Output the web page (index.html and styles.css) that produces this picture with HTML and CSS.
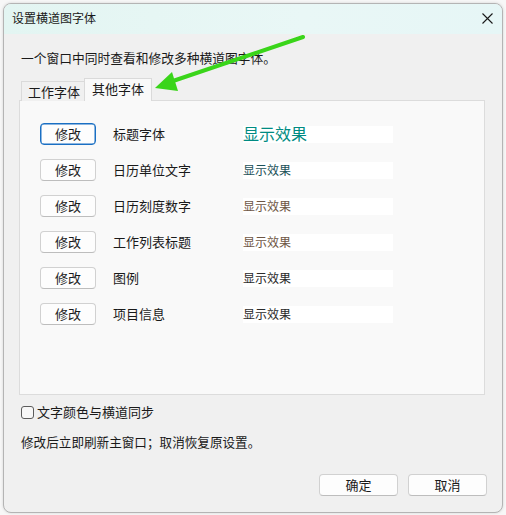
FILE: index.html
```html
<!DOCTYPE html>
<html lang="zh-CN">
<head>
<meta charset="utf-8">
<title>设置横道图字体</title>
<link rel="stylesheet" href="styles.css">
</head>
<body>
<div class="dialog">
  <div class="titlebar">
    <span class="title">设置横道图字体</span>
    <svg class="close" width="11" height="11" viewBox="0 0 11 11"><path d="M0.5 0.5 L10.5 10.5 M10.5 0.5 L0.5 10.5" stroke="#1a1a1a" stroke-width="1.1" fill="none"/></svg>
  </div>
  <div class="body">
    <p class="desc">一个窗口中同时查看和修改多种横道图字体。</p>
    <div class="tabs">
      <div class="tab">工作字体</div>
      <div class="tab active">其他字体</div>
    </div>
    <div class="panel">
      <div class="row"><button class="btn focus">修改</button><span class="label">标题字体</span><span class="preview big c-teal">显示效果</span></div>
      <div class="row"><button class="btn">修改</button><span class="label">日历单位文字</span><span class="preview c-dteal">显示效果</span></div>
      <div class="row"><button class="btn">修改</button><span class="label">日历刻度数字</span><span class="preview c-brown">显示效果</span></div>
      <div class="row"><button class="btn">修改</button><span class="label">工作列表标题</span><span class="preview c-brown">显示效果</span></div>
      <div class="row"><button class="btn">修改</button><span class="label">图例</span><span class="preview c-dark">显示效果</span></div>
      <div class="row"><button class="btn">修改</button><span class="label">项目信息</span><span class="preview c-dark">显示效果</span></div>
    </div>
    <label class="sync"><span class="checkbox"></span>文字颜色与横道同步</label>
    <p class="note">修改后立即刷新主窗口；取消恢复原设置。</p>
    <div class="actions">
      <button class="btn wide">确定</button>
      <button class="btn wide">取消</button>
    </div>
  </div>
  <svg class="arrow" width="506" height="120" viewBox="0 0 506 120">
    <line x1="303" y1="37" x2="170" y2="82" stroke="#3ad51a" stroke-width="4" stroke-linecap="round"/>
    <polygon points="155,88 172,72 178,91" fill="#3ad51a"/>
  </svg>
</div>
</body>
</html>
```
FILE: styles.css
```css
html, body {
  margin: 0;
  padding: 0;
}
body {
  width: 506px;
  height: 515px;
  background: #f7f7f7;
  font-family: "Noto Sans CJK SC", "Microsoft YaHei", sans-serif;
  font-size: 13px;
  color: #1a1a1a;
  overflow: hidden;
  position: relative;
}
.dialog {
  position: relative;
  box-sizing: border-box;
  margin: 3px 0 0 3px;
  width: 500px;
  height: 510px;
  border: 1px solid #b4b4b4;
  border-radius: 8px;
  background: #f0f0f0;
  overflow: hidden;
  box-shadow: 0 0 3px rgba(0,0,0,0.15);
}
.titlebar {
  height: 30px;
  display: flex;
  align-items: center;
  justify-content: space-between;
  padding: 0 9px 0 8px;
  background: linear-gradient(90deg, #e3f5f2 0%, #e9f7f6 60%, #e6f6f6 100%);
}
.title {
  font-size: 12px;
  line-height: 16px;
  margin-top: -2px;
}
.close {
  margin-top: -2px;
}
.body {
  padding: 0 15px;
}
.desc {
  margin: 15px 0 0 2px;
  line-height: 18px;
  font-size: 12.75px;
}
.tabs {
  display: flex;
  align-items: flex-end;
  margin: 11px 0 0 2px;
  height: 23px;
}
.tab {
  box-sizing: border-box;
  height: 20px;
  padding: 0 4px 0 6px;
  line-height: 19px;
  border: 1px solid #dadada;
  border-bottom: none;
  border-right: none;
  background: #f0f0f0;
}
.tab.active {
  height: 23px;
  padding: 0 7px 0 7px;
  line-height: 20px;
  background: #f9f9f9;
  border-right: 1px solid #dadada;
  position: relative;
  z-index: 1;
}
.panel {
  box-sizing: border-box;
  margin-top: -1px;
  width: 466px;
  height: 295px;
  border: 1px solid #dcdcdc;
  background: #f9f9f9;
  padding: 22px 0 0 20px;
  display: flex;
  flex-direction: column;
  gap: 14px;
}
.row {
  display: flex;
  align-items: center;
  height: 22px;
}
.btn {
  box-sizing: border-box;
  width: 56px;
  height: 22px;
  padding: 0;
  font-family: inherit;
  font-size: 13px;
  line-height: 20px;
  color: #1a1a1a;
  background: #fdfdfd;
  border: 1px solid #d1d1d1;
  border-bottom-color: #bdbdbd;
  border-radius: 4px;
}
.btn.focus {
  border: 1px solid #1a6fc3;
  box-shadow: inset 0 0 0 0.5px #1a6fc3;
}
.label {
  margin-left: 17px;
  width: 130px;
  line-height: 18px;
}
.preview {
  box-sizing: border-box;
  width: 150px;
  height: 17px;
  background: #ffffff;
  font-size: 12px;
  line-height: 15px;
  white-space: nowrap;
}
.preview.big {
  font-size: 16px;
  line-height: 15px;
  overflow: visible;
}
.c-teal { color: #008b82; }
.c-dteal { color: #1b5158; }
.c-brown { color: #6e5644; }
.c-dark { color: #2a2a2a; }
.sync {
  display: flex;
  align-items: center;
  margin: 8px 0 0 2px;
  line-height: 18px;
}
.checkbox {
  box-sizing: border-box;
  width: 13px;
  height: 13px;
  border: 1px solid #5c5c5c;
  border-radius: 3px;
  background: #f7f7f7;
  margin-right: 3px;
}
.note {
  margin: 12px 0 0 2px;
  line-height: 18px;
  font-size: 12.6px;
}
.actions {
  display: flex;
  justify-content: flex-end;
  gap: 10px;
  margin-top: 23px;
}
.btn.wide {
  width: 79px;
}
.arrow {
  position: absolute;
  left: -4px;
  top: -4px;
  pointer-events: none;
}
```
